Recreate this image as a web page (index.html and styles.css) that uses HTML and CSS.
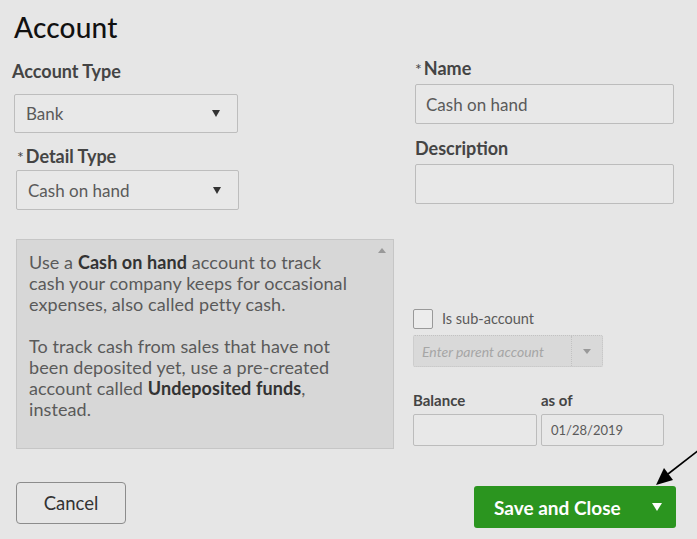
FILE: index.html
```html
<!DOCTYPE html>
<html lang="en">
<head>
<meta charset="utf-8">
<title>Account</title>
<link rel="stylesheet" href="styles.css">
</head>
<body>
<div class="page">
  <h1 class="title">Account</h1>
  <div class="columns">
    <div class="col-left">
      <div class="lbl lbl-type">Account Type</div>
      <div class="select sel-type"><span>Bank</span><span class="caret"></span></div>
      <div class="lbl lbl-detail"><span class="req">*</span>Detail Type</div>
      <div class="select sel-detail"><span>Cash on hand</span><span class="caret"></span></div>
      <div class="info">
        <p>Use a <b>Cash on hand</b> account to track<br>cash your company keeps for occasional<br>expenses, also called petty cash.</p>
        <p>To track cash from sales that have not<br>been deposited yet, use a pre-created<br>account called <b>Undeposited funds</b>,<br>instead.</p>
        <span class="scroll-up"></span>
      </div>
    </div>
    <div class="col-right">
      <div class="lbl lbl-name"><span class="req">*</span>Name</div>
      <div class="input input-wide name-input">Cash on hand</div>
      <div class="lbl lbl-desc">Description</div>
      <div class="input input-wide"></div>
      <div class="sub-row">
        <span class="checkbox"></span>
        <span class="sub-label">Is sub-account</span>
      </div>
      <div class="parent-select">
        <span class="parent-text">Enter parent account</span>
        <span class="parent-btn"><span class="caret caret-grey"></span></span>
      </div>
      <div class="bal-row">
        <div class="bal-col">
          <div class="small-lbl">Balance</div>
          <div class="input input-small bal-input"></div>
        </div>
        <div class="bal-col">
          <div class="small-lbl">as of</div>
          <div class="input input-small date-input">01/28/2019</div>
        </div>
      </div>
    </div>
  </div>
  <div class="footer">
    <div class="btn-cancel">Cancel</div>
    <div class="btn-save"><span class="save-text">Save and Close</span><span class="caret caret-white"></span></div>
  </div>
</div>
<svg class="annot" width="697" height="539" viewBox="0 0 697 539">
  <line x1="699" y1="450" x2="668" y2="474" stroke="#000" stroke-width="1.6"/>
  <polygon points="656,485 664,468 673,480" fill="#000"/>
</svg>
</body>
</html>
```

FILE: styles.css
```css
* { box-sizing: border-box; }
html, body { margin: 0; padding: 0; }
body {
  background: #e6e6e6;
  font-family: "Lato", "Open Sans", sans-serif;
  color: #444;
  width: 697px;
  height: 539px;
  overflow: hidden;
  position: relative;
}
.page {
  padding: 12px 21px 0 14px;
}
.title {
  margin: 0;
  font-size: 28px;
  line-height: 30px;
  font-weight: 500;
  letter-spacing: 0.2px;
  color: #111;
}
.columns {
  display: flex;
  gap: 17px;
}
.col-left {
  width: 382px;
  display: flex;
  flex-direction: column;
}
.col-right {
  display: flex;
  flex-direction: column;
}
.lbl {
  font-size: 18px;
  line-height: 20px;
  height: 20px;
  font-weight: 700;
  color: #444;
}
.req {
  font-weight: 400;
  font-size: 16px;
  line-height: 0;
  margin-right: 2px;
}
.lbl-type { margin-top: 19px; margin-left: -2px; }
.lbl-detail { margin-top: 13px; margin-left: 3px; }
.lbl-name { margin-top: 16px; margin-left: 2px; }
.lbl-desc { margin-top: 14px; margin-left: 2px; }

.select {
  display: flex;
  align-items: center;
  justify-content: space-between;
  border: 1px solid #bdbdbd;
  border-radius: 2px;
  background: #e8e8e8;
  font-size: 17px;
  color: #5a5a5a;
  padding: 0 17px 0 11px;
}
.sel-type { margin-top: 13px; width: 224px; height: 39px; }
.sel-detail { margin-top: 4px; margin-left: 2px; width: 223px; height: 40px; }
.caret {
  width: 0; height: 0;
  border-left: 4.5px solid transparent;
  border-right: 4.5px solid transparent;
  border-top: 7px solid #333;
}
.info {
  position: relative;
  margin-top: 29px;
  margin-left: 2px;
  width: 378px;
  height: 210px;
  background: #d7d7d7;
  border: 1px solid #c6c6c6;
  padding: 12px 10px 0 12px;
  font-size: 18px;
  line-height: 21px;
  letter-spacing: 0.1px;
  color: #5a5a5a;
}
.info p { margin: 0 0 21px 0; white-space: nowrap; }
.info b { color: #333; font-weight: 700; }
.scroll-up {
  position: absolute;
  right: 7px;
  top: 8px;
  width: 0; height: 0;
  border-left: 4px solid transparent;
  border-right: 4px solid transparent;
  border-bottom: 5px solid #999;
}
.input {
  border: 1px solid #bcbcbc;
  border-radius: 2px;
  background: #e8e8e8;
  color: #5a5a5a;
  display: flex;
  align-items: center;
}
.input-wide {
  margin-top: 6px;
  margin-left: 2px;
  width: 259px;
  height: 40px;
  font-size: 17px;
  padding-left: 10px;
}
.sub-row {
  margin-top: 105px;
  display: flex;
  align-items: center;
  height: 20px;
}
.checkbox {
  width: 20px; height: 20px;
  border: 1px solid #999;
  border-radius: 2px;
  background: #ececec;
}
.sub-label {
  margin-left: 9px;
  font-size: 14.5px;
  line-height: 20px;
  color: #5a5a5a;
}
.parent-select {
  margin-top: 6px;
  width: 190px;
  height: 32px;
  display: flex;
  background: #d9d9d9;
  border: 1px dotted #c2c2c2;
  border-radius: 2px;
}
.parent-text {
  flex: 1;
  display: flex;
  align-items: center;
  padding-left: 8px;
  font-size: 14px;
  font-style: italic;
  color: #a6a6a6;
  border-right: 1px dotted #c2c2c2;
  white-space: nowrap;
}
.parent-btn {
  width: 30px;
  display: flex;
  align-items: center;
  justify-content: center;
}
.caret-grey {
  border-left-width: 4px;
  border-right-width: 4px;
  border-top: 5px solid #999;
}
.bal-row {
  margin-top: 24px;
  display: flex;
  gap: 4px;
}
.small-lbl {
  font-size: 15px;
  line-height: 18px;
  font-weight: 700;
  color: #444;
}
.input-small {
  margin-top: 5px;
  height: 32px;
  font-size: 13px;
  padding-left: 9px;
}
.bal-input { width: 124px; }
.date-input { width: 123px; }

.footer {
  margin-top: 33px;
  display: flex;
  justify-content: space-between;
  align-items: flex-start;
  padding-left: 2px;
}
.btn-cancel {
  width: 110px;
  height: 42px;
  border: 1px solid #8c8c8c;
  border-radius: 4px;
  display: flex;
  align-items: center;
  justify-content: center;
  font-size: 18.5px;
  color: #333;
}
.btn-save {
  margin-top: 4px;
  width: 202px;
  height: 42px;
  background: #2b951f;
  border-radius: 3px;
  display: flex;
  align-items: center;
  justify-content: space-between;
  padding: 0 14px 0 20px;
  color: #fff;
}
.save-text {
  font-size: 19px;
  font-weight: 700;
}
.caret-white {
  border-left-width: 5px;
  border-right-width: 5px;
  border-top: 8px solid #fff;
}
.annot {
  position: absolute;
  left: 0;
  top: 0;
  pointer-events: none;
}
```
